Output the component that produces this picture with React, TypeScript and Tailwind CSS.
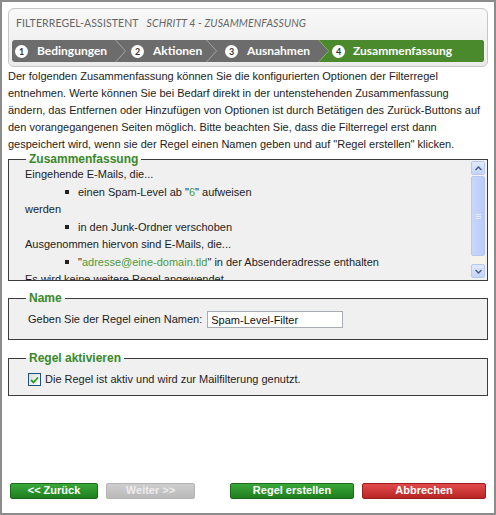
import React from "react";

const steps = [
  { n: 1, label: "Bedingungen", w: "w-[115px]", pl: "pl-[3px]" },
  { n: 2, label: "Aktionen", w: "w-[91px]", pl: "pl-[4px]" },
  { n: 3, label: "Ausnahmen", w: "w-[100px]", pl: "pl-[7px]" },
];

function Chevron({ stroke = "#a3a3a3" }: { stroke?: string }) {
  return (
    <svg width="12" height="22" viewBox="0 0 12 22" className="block">
      <polyline points="0.5,0 10.5,11 0.5,22" fill="none" stroke={stroke} strokeWidth="1" />
    </svg>
  );
}

function StepDot({ n }: { n: number }) {
  return (
    <span className="w-[13px] h-[13px] rounded-full bg-white text-[#333] text-[9px] font-bold flex items-center justify-center leading-none shrink-0">
      {n}
    </span>
  );
}

function Header() {
  return (
    <div className="rounded-[6px] border border-[#c6c6c6] bg-gradient-to-b from-[#f8f8f8] to-[#ebebeb]">
      <div className="h-[31px] flex items-center pl-[7px] pb-[2px] font-['Lato',sans-serif] text-[10.5px] text-[#666] tracking-[0.1px]">
        <span>FILTERREGEL-ASSISTENT</span>
        <span className="ml-[8px] italic">SCHRITT 4 - ZUSAMMENFASSUNG</span>
      </div>
      <div className="mx-[3px] mb-[4px] h-[22px] rounded-[3px] bg-[#6c6c6c] flex overflow-hidden font-['Lato',sans-serif] font-bold text-[12px] text-white">
        {steps.map((s, i) => (
          <div key={s.n} className={`relative ${s.w} ${s.pl} flex items-center gap-[9px] shrink-0`}>
            <StepDot n={s.n} />
            <span>{s.label}</span>
            {i < 2 && (
              <span className="absolute right-0 top-0">
                <Chevron />
              </span>
            )}
          </div>
        ))}
        <div className="relative flex-1 bg-[#4b8a2c] [clip-path:polygon(0_0,100%_0,100%_100%,0_100%,10px_50%)] pl-[14px] flex items-center gap-[8px]">
          <span className="absolute left-0 top-0">
            <Chevron stroke="#8fb57a" />
          </span>
          <StepDot n={4} />
          <span>Zusammenfassung</span>
        </div>
      </div>
    </div>
  );
}

function Legend({ children }: { children: React.ReactNode }) {
  return (
    <legend className="ml-[17px] px-[3px] text-[12px] leading-[14px] font-bold text-[#3a8a2a]">
      {children}
    </legend>
  );
}

function Val({ children }: { children: React.ReactNode }) {
  return (
    <>
      "<span className="text-[#4f9a3c]">{children}</span>"
    </>
  );
}

function Bullet({ children }: { children: React.ReactNode }) {
  return (
    <div className="flex items-center pl-[40px]">
      <span className="w-[4px] h-[4px] bg-[#222] mr-[9px]" />
      <span>{children}</span>
    </div>
  );
}

function Scrollbar() {
  return (
    <div className="w-[14px] -mt-[5px] mb-[2px] mr-[2px] flex flex-col bg-[#f4f3ee]">
      <div className="h-[14px] rounded-[2px] border border-[#b8c8ee] bg-gradient-to-b from-[#e2eafe] to-[#c4d3fb] flex items-center justify-center">
        <svg width="7" height="5" viewBox="0 0 7 5"><polyline points="0.5,4 3.5,1 6.5,4" fill="none" stroke="#4d6185" strokeWidth="1.5" /></svg>
      </div>
      <div className="mt-[1px] h-[80px] rounded-[2px] border border-[#b8c8ee] bg-gradient-to-r from-[#c9d7fc] to-[#b9cbfa] flex items-center justify-center">
        <div className="flex flex-col gap-[1px]">
          <span className="w-[5px] h-px bg-[#e6edfd]" />
          <span className="w-[5px] h-px bg-[#e6edfd]" />
          <span className="w-[5px] h-px bg-[#e6edfd]" />
        </div>
      </div>
      <div className="flex-1" />
      <div className="h-[14px] rounded-[2px] border border-[#b8c8ee] bg-gradient-to-b from-[#e2eafe] to-[#c4d3fb] flex items-center justify-center">
        <svg width="7" height="5" viewBox="0 0 7 5"><polyline points="0.5,1 3.5,4 6.5,1" fill="none" stroke="#4d6185" strokeWidth="1.5" /></svg>
      </div>
    </div>
  );
}

function Btn({ children, cls }: { children: React.ReactNode; cls: string }) {
  return (
    <button className={`h-[16px] rounded-[2px] border text-[11px] leading-none font-bold flex items-center justify-center pb-[2px] ${cls}`}>
      {children}
    </button>
  );
}

export default function App() {
  return (
    <div className="w-[496px] h-[515px] box-border border-2 border-[#8c8c8c] bg-white flex flex-col px-[6px] pt-[6px] font-['Liberation_Sans',Arial,sans-serif] text-[#1c1c1c]">
      <Header />

      <p className="mt-[1px] text-[11px] leading-[17px]">
        Der folgenden Zusammenfassung können Sie die konfigurierten Optionen der Filterregel
        entnehmen. Werte können Sie bei Bedarf direkt in der untenstehenden Zusammenfassung
        ändern, das Entfernen oder Hinzufügen von Optionen ist durch Betätigen des Zurück-Buttons auf
        den vorangegangenen Seiten möglich. Bitte beachten Sie, dass die Filterregel erst dann
        gespeichert wird, wenn sie der Regel einen Namen geben und auf "Regel erstellen" klicken.
      </p>

      <fieldset className="-mt-[1px] border border-[#3c3c3c] bg-[#f0f0f0]">
        <Legend>Zusammenfassung</Legend>
        <div className="flex h-[114px]">
          <div className="flex-1 overflow-hidden pl-[16px] text-[11px] leading-[17.5px]">
            <div>Eingehende E-Mails, die...</div>
            <Bullet>
              einen Spam-Level ab <Val>6</Val> aufweisen
            </Bullet>
            <div>werden</div>
            <Bullet>in den Junk-Ordner verschoben</Bullet>
            <div>Ausgenommen hiervon sind E-Mails, die...</div>
            <Bullet>
              <Val>adresse@eine-domain.tld</Val> in der Absenderadresse enthalten
            </Bullet>
            <div>Es wird keine weitere Regel angewendet.</div>
          </div>
          <Scrollbar />
        </div>
      </fieldset>

      <fieldset className="mt-[10px] border border-[#3c3c3c] bg-[#f0f0f0]">
        <Legend>Name</Legend>
        <div className="flex items-center pl-[19px] pt-[6px] pb-[11px] text-[11px]">
          <span>Geben Sie der Regel einen Namen:</span>
          <input
            readOnly
            value="Spam-Level-Filter"
            className="ml-[5px] w-[136px] h-[17px] bg-white border border-[#a8adb4] px-[3px] text-[11px] text-[#111] outline-none"
          />
        </div>
      </fieldset>

      <fieldset className="mt-[11px] border border-[#3c3c3c] bg-[#f0f0f0]">
        <Legend>Regel aktivieren</Legend>
        <div className="flex items-center pl-[19px] pt-[7px] pb-[8px] text-[11px] leading-[15px]">
          <span className="w-[13px] h-[13px] border border-[#1c5180] bg-gradient-to-br from-[#dcdcd7] to-white flex items-center justify-center">
            <svg width="9" height="8" viewBox="0 0 9 8">
              <polyline points="1,4 3.5,6.5 8,1.5" fill="none" stroke="#21a121" strokeWidth="1.8" />
            </svg>
          </span>
          <span className="ml-[4px]">Die Regel ist aktiv und wird zur Mailfilterung genutzt.</span>
        </div>
      </fieldset>

      <div className="mt-auto mb-[14px] flex font-['Liberation_Sans',Arial,sans-serif]">
        <Btn cls="ml-[2px] w-[88px] text-white border-[#1c6b1c] bg-gradient-to-b from-[#3aa83a] to-[#1d7f1d]">
          &lt;&lt; Zurück
        </Btn>
        <Btn cls="ml-[8px] w-[89px] text-[#ececec] border-[#b4b4b4] bg-gradient-to-b from-[#cecece] to-[#b9b9b9]">
          Weiter &gt;&gt;
        </Btn>
        <Btn cls="ml-auto w-[124px] text-white border-[#1c6b1c] bg-gradient-to-b from-[#3aa83a] to-[#1d7f1d]">
          Regel erstellen
        </Btn>
        <Btn cls="ml-[8px] mr-[2px] w-[124px] text-white border-[#9e1e1e] bg-gradient-to-b from-[#e24a4a] to-[#b92424]">
          Abbrechen
        </Btn>
      </div>
    </div>
  );
}
